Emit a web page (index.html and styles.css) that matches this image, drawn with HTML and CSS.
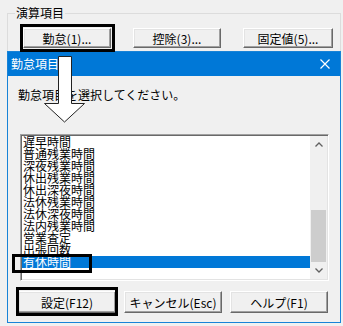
FILE: index.html
```html
<!DOCTYPE html>
<html lang="ja">
<head>
  <meta charset="UTF-8" />
  <title>勤怠項目</title>
  <link rel="stylesheet" href="styles.css">
</head>
<body>

<!-- 演算項目 group -->
<fieldset class="group">
  <legend>演算項目</legend>
  <div class="group-buttons">
    <button class="btn btn-top">勤怠(1)...</button>
    <button class="btn btn-top">控除(3)...</button>
    <button class="btn btn-top btn-wide">固定値(5)...</button>
  </div>
</fieldset>

<!-- dialog -->
<div class="dialog">
  <div class="titlebar">
    <span class="title">勤怠項目</span>
    <svg class="close" width="10" height="10" viewBox="0 0 10 10"><path d="M0.5 0.5 L9.5 9.5 M9.5 0.5 L0.5 9.5" stroke="#fff" stroke-width="1.2" fill="none"/></svg>
  </div>
  <div class="dialog-body">
    <p class="prompt">勤怠項目を選択してください。</p>
    <div class="listbox">
      <ul class="items">
        <li>遅早時間</li>
        <li>普通残業時間</li>
        <li>深夜残業時間</li>
        <li>休出残業時間</li>
        <li>休出深夜時間</li>
        <li>法休残業時間</li>
        <li>法休深夜時間</li>
        <li>法内残業時間</li>
        <li>営業査定</li>
        <li>出張回数</li>
        <li class="selected">有休時間</li>
      </ul>
      <div class="scrollbar">
        <div class="sb-btn">
          <svg width="8" height="5" viewBox="0 0 8 5"><path d="M0.5 4.5 L4 1 L7.5 4.5" stroke="#606060" stroke-width="1.3" fill="none"/></svg>
        </div>
        <div class="sb-track"><div class="sb-thumb"></div></div>
        <div class="sb-btn">
          <svg width="8" height="5" viewBox="0 0 8 5"><path d="M0.5 0.5 L4 4 L7.5 0.5" stroke="#606060" stroke-width="1.3" fill="none"/></svg>
        </div>
      </div>
    </div>
    <div class="dialog-buttons">
      <button class="btn btn-bottom">設定(F12)</button>
      <button class="btn btn-bottom">キャンセル(Esc)</button>
      <button class="btn btn-bottom">ヘルプ(F1)</button>
    </div>
  </div>
</div>

<!-- annotations -->
<div class="mark mark-kintai"></div>
<div class="mark mark-item"></div>
<div class="mark mark-ok"></div>
<svg class="arrow" width="44" height="68" viewBox="0 0 44 68">
  <polygon points="15.5,0.5 28.5,0.5 28.5,47.5 41.5,47.5 21.5,66 1.5,47.5 15.5,47.5" fill="#fff" stroke="#222" stroke-width="1"/>
</svg>

</body>
</html>
```

FILE: styles.css
```css
body { margin: 0; background: #f0f0f0; font-family: "Noto Sans CJK JP", "Liberation Sans", sans-serif; font-size: 12px; color: #000; position: relative; width: 343px; height: 326px; overflow: hidden; }

.group { margin: 5px 5px 0 7px; padding: 7px 7px 3px 7px; border: 1px solid #dcdcdc; border-bottom: none; }
.group legend { padding: 0 1px; line-height: 16px; margin-left: 0; }
.group-buttons { display: flex; gap: 22px; padding-left: 8px; }

.btn { font-family: inherit; font-size: 12px; color: #000; background: #f0f0f0; border: 1px solid; border-color: #fff #696969 #696969 #fff; box-shadow: inset -1px -1px #a0a0a0, inset 1px 1px #e3e3e3; padding: 0; margin: 0; }
.btn-top { width: 88px; height: 20px; line-height: 17px; }
.btn-wide { width: 90px; }
.btn-bottom { width: 98px; height: 22px; line-height: 19px; }

.dialog { margin-left: 7px; width: 334px; border: 1px solid #1883d7; box-sizing: border-box; background: #f0f0f0; }
.titlebar { height: 24px; background: #0078d7; color: #fff; display: flex; align-items: center; justify-content: space-between; padding: 0 10px 0 3px; }
.title { line-height: 14px; }
.close { display: block; }

.dialog-body { padding: 0 0 9px 0; }
.prompt { margin: 0; padding: 12px 0 0 10px; line-height: 14px; }

.listbox { margin: 32px 0 0 12px; width: 309px; height: 147px; box-sizing: border-box; display: flex; background: #fff; border: 1px solid; border-color: #a0a0a0 #fff #fff #a0a0a0; box-shadow: inset 1px 1px #696969, inset -1px -1px #e3e3e3; padding: 1px 1px 1px 1px; }
.items { list-style: none; margin: 0; padding: 0; flex: 1; overflow: hidden; }
.items li { height: 12px; line-height: 12px; padding-left: 1px; white-space: nowrap; }
.items li.selected { background: #0078d7; color: #fff; }

.scrollbar { width: 17px; display: flex; flex-direction: column; background: #f0f0f0; }
.sb-btn { height: 17px; display: flex; align-items: center; justify-content: center; }
.sb-track { flex: 1; display: flex; flex-direction: column; justify-content: flex-end; }
.sb-thumb { height: 52px; background: #cdcdcd; margin: 0 1px; }

.dialog-buttons { display: flex; gap: 8px; padding: 10px 0 0 10px; }

.mark { position: absolute; border: 3px solid #000; box-sizing: border-box; }
.mark-kintai { left: 20px; top: 24px; width: 95px; height: 28px; }
.mark-item { left: 12px; top: 254px; width: 80px; height: 19px; }
.mark-ok { left: 16px; top: 287px; width: 102px; height: 29px; }
.arrow { position: absolute; left: 43px; top: 56px; }
```
